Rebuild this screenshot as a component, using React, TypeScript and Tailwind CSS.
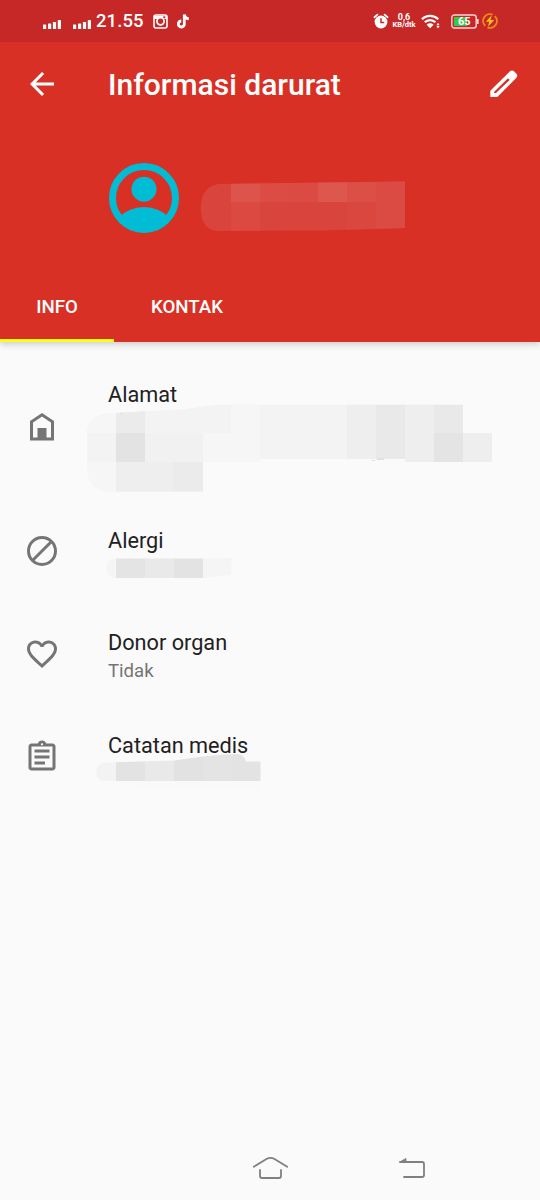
import React from 'react'

export default function App() {
  return (
    <div className="flex h-[1200px] w-[540px] flex-col overflow-hidden bg-[#fafafa] font-['Roboto',sans-serif]">
      <StatusBar />
      <header className="z-10 flex h-[300px] flex-col bg-[#d93025] text-white shadow-[0_2px_7px_rgba(0,0,0,0.2)]">
        <div className="flex h-[84px] items-center pl-[24px] pr-[18px]">
          <BackIcon />
          <h1 className="ml-[48px] mt-[2px] text-[30px] font-medium leading-9">Informasi darurat</h1>
          <PencilIcon />
        </div>
        <div className="flex h-[146px] items-start pl-[108px] pt-[36px]">
          <Avatar />
          <NameMosaic />
        </div>
        <nav className="flex h-[70px] text-[18.7px] font-medium">
          <Tab label="INFO" className="w-[114px] border-[#ffff1a]" />
          <Tab label="KONTAK" className="w-[146px] border-transparent" />
        </nav>
      </header>

      <main className="flex flex-1 flex-col pt-[12px]">
        <Row label="Alamat" icon={<HomeIcon />} className="h-[146px]">
          <AddressMosaic />
        </Row>
        <Row label="Alergi" icon={<BlockIcon />} className="h-[102px]">
          <AllergyMosaic />
        </Row>
        <Row label="Donor organ" icon={<HeartIcon />} className="h-[103px]">
          <p className="pt-[2px] text-[18.6px] leading-[26px] text-[#757575]">Tidak</p>
        </Row>
        <Row label="Catatan medis" icon={<ClipboardIcon />} className="h-[103px]">
          <NotesMosaic />
        </Row>
      </main>

      <NavBar />
    </div>
  )
}

function Row({ label, icon, className, children }: {
  label: string; icon: React.ReactNode; className: string; children: React.ReactNode
}) {
  return (
    <section className={`flex shrink-0 ${className}`}>
      <div className="flex w-[108px] items-center pl-[24px] text-[#757575]">{icon}</div>
      <div className="pt-[27px]">
        <h2 className="text-[21.7px] leading-[28px] text-[#212121]">{label}</h2>
        <div className="-mt-px">{children}</div>
      </div>
    </section>
  )
}

function Tab({ label, className }: { label: string; className: string }) {
  return (
    <div className={`flex items-center justify-center border-b-[3px] pt-[4px] ${className}`}>{label}</div>
  )
}

function StatusBar() {
  return (
    <div className="relative z-20 flex h-[42px] shrink-0 items-center bg-[#c62828] pl-[43px] pr-[42px] text-white">
      <Signal />
      <Signal className="ml-[12px]" />
      <span className="ml-[5px] mt-[1px] w-[48px] text-[18.5px] font-medium leading-none tracking-[0.1px]">21.55</span>
      <svg className="ml-[9px]" width="15" height="15" viewBox="0 0 15 15">
        <rect x="1" y="1" width="13" height="13" rx="2" fill="none" stroke="#fff" strokeWidth="1.6" />
        <path d="M1 2h13v3H1z" fill="#fff" />
        <circle cx="7.5" cy="7.3" r="3.6" fill="#c62828" stroke="#fff" strokeWidth="1.7" />
        <path d="M10.3 2.3h2v2h-2z" fill="#c62828" />
      </svg>
      <svg className="ml-[9px]" width="13" height="15" viewBox="0 0 13 15" fill="none" stroke="#fff" strokeWidth="2.8">
        <path d="M7.3 .5v9.6a3 3 0 1 1-3-3.1" />
        <path d="M7.3 .8c.3 2.3 2 3.8 4.5 4" />
      </svg>
      <div className="ml-auto flex items-center">
        <svg width="16" height="17" viewBox="0 0 16 17">
          <circle cx="8" cy="9" r="6.4" fill="#fff" />
          <path d="M1.4 4.2l3-2.6M14.6 4.2l-3-2.6" stroke="#fff" strokeWidth="1.8" strokeLinecap="round" />
          <path d="M8 5.2v4.2h3.2" fill="none" stroke="#c62828" strokeWidth="1.5" />
        </svg>
        <div className="ml-[3px] flex w-[24px] flex-col items-center text-[9px] font-bold leading-[8px]">
          <span>0,6</span>
          <span className="text-[7.5px]">KB/dtk</span>
        </div>
        <svg className="ml-[5px]" width="20" height="15" viewBox="0 0 20 15" fill="none" stroke="#fff" strokeWidth="2.2">
          <path d="M1 5.3a11.3 11.3 0 0 1 16.2 0M3.8 8.3a7.4 7.4 0 0 1 10.6 0" />
          <path d="M9.1 14.2L5.6 10.7a5 5 0 0 1 7 0z" fill="#fff" stroke="none" />
          <path d="M15.4 11.2l1.6-2.4 1.6 2.4zM15.4 12.1l1.6 2.4 1.6-2.4z" fill="#fff" stroke="none" />
        </svg>
        <svg className="ml-[10px]" width="28" height="15" viewBox="0 0 28 15">
          <rect x=".8" y="1" width="24.4" height="13" rx="2.5" fill="none" stroke="#fbd5d5" strokeWidth="1.4" />
          <path d="M26 5h1.6v5H26z" fill="#fbd5d5" />
          <path d="M3 3h13v9H3z" fill="#35c94b" />
          <text x="13.2" y="11.4" textAnchor="middle" fontSize="11" fontWeight="700" fill="#fff">65</text>
        </svg>
        <svg className="ml-[3px]" width="16" height="16" viewBox="0 0 16 16">
          <path d="M10.5 1.6A6.8 6.8 0 0 0 3.2 12.8M5.5 14.4A6.8 6.8 0 0 0 12.8 3.2" fill="none" stroke="#f38b1b" strokeWidth="1.8" />
          <path d="M9.8 2.2L3.8 8.8h3.5L6 13.8l6.2-6.7H8.5z" fill="#ffc51e" />
        </svg>
      </div>
    </div>
  )
}

function Signal({ className = '' }: { className?: string }) {
  return (
    <svg className={`mt-[6px] ${className}`} width="18" height="9" viewBox="0 0 18 9" fill="#fff">
      <rect x="0" y="4.5" width="3.2" height="4.5" rx=".5" />
      <rect x="5" y="3.5" width="3.2" height="5.5" rx=".5" />
      <rect x="9.900" y="2" width="3.2" height="7" rx=".5" />
      <rect x="14.800" y="0" width="3.2" height="9" rx=".5" />
    </svg>
  )
}

function BackIcon() {
  return (
    <svg width="36" height="36" viewBox="0 0 24 24" fill="currentColor">
      <path d="M20 11H7.83l5.59-5.59L12 4l-8 8 8 8 1.41-1.41L7.83 13H20v-2z" />
    </svg>
  )
}

function PencilIcon() {
  return (
    <svg className="ml-auto" width="36" height="36" viewBox="0 0 36 36">
      <path d="M4.3 24.8L23.8 5.6q2.2-2 4.4 0l2 2q2 2.2 0 4.4L11.3 31H4.3z" fill="#fff" />
      <path d="M8.2 27v-1.2L22 12.3l1.7 1.7L10 27z" fill="#d93025" />
    </svg>
  )
}

function Avatar() {
  return (
    <svg width="72" height="72" viewBox="0 0 72 72" fill="#00bcd4">
      <circle cx="36" cy="36" r="31.5" fill="none" stroke="#00bcd4" strokeWidth="7" />
      <circle cx="36" cy="27.2" r="12.5" />
      <path d="M11 55.5Q21 45 36 45t25 10.5A31.5 31.5 0 0 1 11 55.5z" />
    </svg>
  )
}

function NameMosaic() {
  return (
    <svg className="ml-[20px] mt-[19px]" width="206" height="52" viewBox="0 0 206 52">
      <defs>
        <clipPath id="name">
          <path d="M18 3L205 .5V47L120 49.5 18 50Q1 49 1 28 0 7 18 3z" />
        </clipPath>
      </defs>
      <g clipPath="url(#name)">
        <path d="M0 0h206v52H0z" fill="#d9443c" />
        <path d="M31 0h29v21H31z" fill="#dd544d" />
        <path d="M60 0h29v21H60z" fill="#dc4c45" />
        <path d="M89 0h29v21H89z" fill="#db4a43" />
        <path d="M118 0h29v21H118z" fill="#de574f" />
        <path d="M147 0h29v21H147z" fill="#dc4f47" />
        <path d="M176 0h30v52H176z" fill="#db4b43" />
        <path d="M31 21h29v31H31z" fill="#db4940" />
        <path d="M147 21h29v31H147z" fill="#da473f" />
      </g>
    </svg>
  )
}

function AddressMosaic() {
  return (
    <svg className="-ml-[22px] -mt-[5px]" width="406" height="88" viewBox="0 0 406 88">
      <defs>
        <clipPath id="address">
          <path d="M20 9.5L100 5 130 .8H377V29h29v29H319v-3H174v3H117v29.5H22Q1 86 1 62V30Q1 12 20 9.5z" />
        </clipPath>
      </defs>
      <g clipPath="url(#address)">
        <path d="M0 0h406v88H0z" fill="#f3f3f3" />
        <path d="M0 0h30v29H0zM0 58h30v30H0z" fill="#f6f6f6" />
        <path d="M30 0h29v29H30z" fill="#ebebeb" />
        <path d="M30 29h29v29H30z" fill="#e3e3e3" />
        <path d="M59 29h58v29H59z" fill="#f1f1f1" />
        <path d="M30 58h57v30H30z" fill="#eeeeee" />
        <path d="M87 58h30v30H87z" fill="#ebebeb" />
        <path d="M117 29h57v29H117zM145 0h29v29H145z" fill="#f6f6f6" />
        <path d="M261 0h29v58H261zM319 0h29v58H319zM377 29h29v29H377z" fill="#eeeeee" />
        <path d="M290 0h29v58H290zM348 0h29v29H348z" fill="#e9e9e9" />
        <path d="M348 29h29v29H348z" fill="#e4e4e4" />
      </g>
      <path d="M286 56h3v1H286zM291 54.5h7v1.5H291zM34 9h2v1H34z" fill="#dedede" />
    </svg>
  )
}

function AllergyMosaic() {
  return (
    <svg className="-ml-[3px] mt-[4px]" width="128" height="21" viewBox="0 0 128 21">
      <path d="M11 1Q1 1 1 10t10 10zM98 .5L127 0 126 17 98 20z" fill="#f5f5f5" />
      <path d="M11 .5h29V20H11z" fill="#e4e4e4" />
      <path d="M40 .5h29V20H40z" fill="#e9e9e9" />
      <path d="M69 .5h29V20H69z" fill="#e3e3e3" />
    </svg>
  )
}

function NotesMosaic() {
  return (
    <svg className="-ml-[13px] -mt-[6px]" width="166" height="36" viewBox="0 0 166 36">
      <defs>
        <clipPath id="notes">
          <path d="M12 8.5L80 6.5Q120 0 142 0q7 0 9 7.5h14.5V27H12Q1 27 1 18t11-9.5z" />
        </clipPath>
      </defs>
      <path d="M21 27h144v8H50z" fill="#f9f9f9" />
      <g clipPath="url(#notes)">
        <path d="M0 0h21v27H0z" fill="#f3f3f3" />
        <path d="M21 0h29v27H21z" fill="#e3e3e3" />
        <path d="M50 0h29v27H50z" fill="#e9e9e9" />
        <path d="M79 0h29v27H79z" fill="#e2e2e2" />
        <path d="M108 0h29v27H108z" fill="#e4e4e4" />
        <path d="M137 0h29v27H137z" fill="#e3e3e3" />
      </g>
    </svg>
  )
}

function HomeIcon() {
  return (
    <svg width="36" height="36" viewBox="0 0 36 36">
      <path d="M7.5 30V12.7L18 5.7l10.5 7V30z" fill="none" stroke="currentColor" strokeWidth="3" />
      <path d="M13.5 19h9v11.5h-9z" fill="currentColor" />
    </svg>
  )
}

function BlockIcon() {
  return (
    <svg width="36" height="36" viewBox="0 0 36 36" fill="none" stroke="currentColor" strokeWidth="3">
      <circle cx="18" cy="18" r="13.5" />
      <path d="M8.5 27.5l19-19" />
    </svg>
  )
}

function HeartIcon() {
  return (
    <svg width="36" height="36" viewBox="0 0 24 24" fill="currentColor">
      <path d="M16.5 3c-1.74 0-3.41.81-4.5 2.09C10.91 3.81 9.24 3 7.5 3 4.42 3 2 5.42 2 8.5c0 3.78 3.4 6.86 8.55 11.54L12 21.35l1.45-1.32C18.6 15.36 22 12.28 22 8.5 22 5.42 19.58 3 16.5 3zm-4.4 15.55l-.1.1-.1-.1C7.14 14.24 4 11.39 4 8.5 4 6.5 5.5 5 7.5 5c1.54 0 3.04.99 3.57 2.36h1.87C13.46 5.99 14.96 5 16.5 5c2 0 3.5 1.5 3.5 3.5 0 2.89-3.14 5.74-7.9 10.05z" />
    </svg>
  )
}

function ClipboardIcon() {
  return (
    <svg width="36" height="36" viewBox="0 0 24 24" fill="currentColor">
      <path d="M7 15h7v2H7zm0-4h10v2H7zm0-4h10v2H7zm12-4h-4.18C14.4 1.84 13.3 1 12 1s-2.4.84-2.82 2H5c-1.1 0-2 .9-2 2v14c0 1.1.9 2 2 2h14c1.1 0 2-.9 2-2V5c0-1.1-.9-2-2-2zm-7-.25c.41 0 .75.34.75.75s-.34.75-.75.75-.75-.34-.75-.75.34-.75.75-.75zM19 19H5V5h14v14z" />
    </svg>
  )
}

function NavBar() {
  return (
    <nav className="flex h-[64px] shrink-0 items-center pl-[252px] text-[#808080]">
      <svg width="37" height="24" viewBox="0 0 37 24" fill="none" stroke="currentColor" strokeWidth="1.8" strokeLinecap="round" strokeLinejoin="round">
        <path d="M1.8 10.8L14.5 3q4-2.2 8 0l12.7 7.8" />
        <path d="M8 14v6q0 2 2 2h17q2 0 2-2v-6" />
      </svg>
      <svg className="ml-[109px]" width="28" height="24" viewBox="0 0 28 24" fill="none" stroke="currentColor" strokeWidth="1.8" strokeLinecap="round" strokeLinejoin="round">
        <path d="M2 6h22q2 0 2 2v11q0 2-2 2H6" />
        <path d="M2 5.8L8 2.4v3.4z" fill="currentColor" strokeWidth=".8" />
      </svg>
    </nav>
  )
}
